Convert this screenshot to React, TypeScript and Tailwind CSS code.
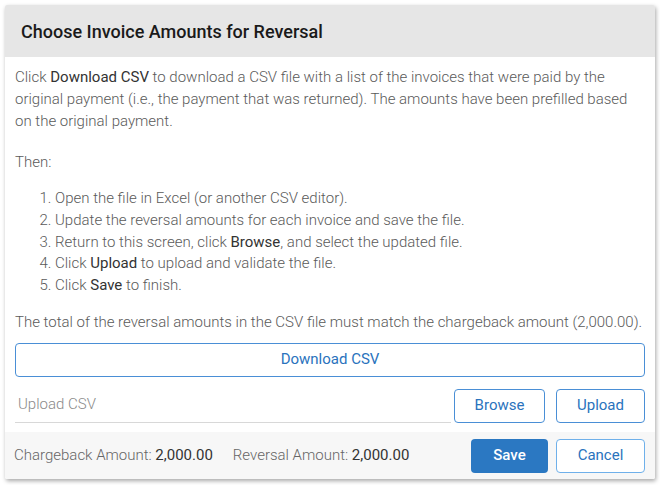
import React from "react";

export default function App() {
  const font = { fontFamily: "Roboto, 'Noto Sans', sans-serif" };
  return (
    <div className="w-[660px] h-[485px] bg-white p-[5px] pr-[5px]" style={font}>
      <div className="w-[650px] h-[474px] flex flex-col bg-white shadow-[1px_2px_4px_rgba(0,0,0,0.35)] rounded-[2px] overflow-hidden">
        <div className="h-[52px] shrink-0 bg-[#e6e6e6] flex items-center pl-[16px]">
          <h1 className="text-[18px] font-medium text-[#1a1a1a]">Choose Invoice Amounts for Reversal</h1>
        </div>
        <div className="flex-1 flex flex-col px-[10px] pt-[10px] text-[15px] leading-[21.75px] font-light text-[#5a5a5a]">
          <p>
            Click <b className="font-normal text-[#333]">Download CSV</b> to download a CSV file with a list of the invoices that were paid by the original payment (i.e., the payment that was returned). The amounts have been prefilled based on the original payment.
          </p>
          <p className="mt-[20px]">Then:</p>
          <ol className="mt-[14px] pl-[40px] list-decimal">
            <li>Open the file in Excel (or another CSV editor).</li>
            <li>Update the reversal amounts for each invoice and save the file.</li>
            <li>Return to this screen, click <b className="font-normal text-[#333]">Browse</b>, and select the updated file.</li>
            <li>Click <b className="font-normal text-[#333]">Upload</b> to upload and validate the file.</li>
            <li>Click <b className="font-normal text-[#333]">Save</b> to finish.</li>
          </ol>
          <p className="mt-[15px]">The total of the reversal amounts in the CSV file must match the chargeback amount (2,000.00).</p>
          <button className="mt-[9px] h-[34px] w-full rounded-[4px] border border-[#4a8fd6] text-[#2a73bd] font-normal text-[15px]">
            Download CSV
          </button>
          <div className="mt-[12px] flex items-center gap-[3px]">
            <div className="flex-1 h-[34px] border-b border-[#d8d8d8] flex items-center text-[#8a8a8a] font-light pl-[3px]">
              Upload CSV
            </div>
            <button className="w-[91px] h-[34px] rounded-[4px] border border-[#4a8fd6] text-[#2a73bd] font-normal">Browse</button>
            <button className="ml-[8px] w-[89px] h-[34px] rounded-[4px] border border-[#4a8fd6] text-[#2a73bd] font-normal">Upload</button>
          </div>
        </div>
        <div className="h-[47px] shrink-0 bg-[#f7f7f7] flex items-center px-[10px] pl-[9px] text-[15px] font-light text-[#666]">
          <span>Chargeback Amount: <span className="text-[#333] font-normal">2,000.00</span></span>
          <span className="ml-[20px]">Reversal Amount: <span className="text-[#333] font-normal">2,000.00</span></span>
          <div className="ml-auto flex gap-[8px]">
            <button className="w-[77px] h-[34px] rounded-[4px] bg-[#2b78c2] text-white font-medium text-[15px]">Save</button>
            <button className="w-[89px] h-[34px] rounded-[4px] border border-[#6fb0ea] bg-white text-[#2a73bd] font-normal text-[15px]">Cancel</button>
          </div>
        </div>
      </div>
    </div>
  );
}
